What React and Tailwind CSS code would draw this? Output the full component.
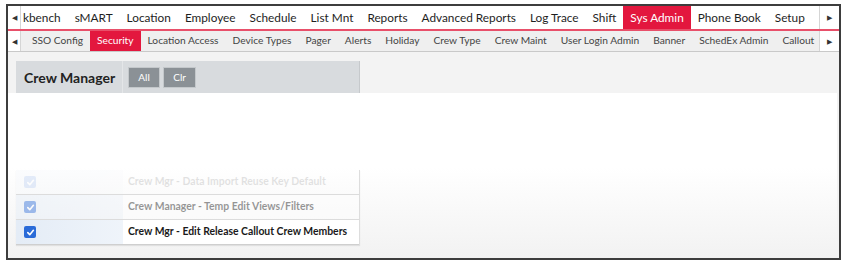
const topItems = ["sMART", "Location", "Employee", "Schedule", "List Mnt", "Reports", "Advanced Reports", "Log Trace", "Shift", "Sys Admin", "Phone Book", "Setup"];
const subItems = ["SSO Config", "Security", "Location Access", "Device Types", "Pager", "Alerts", "Holiday", "Crew Type", "Crew Maint", "User Login Admin", "Banner", "SchedEx Admin", "Callout"];

const rows = [
  { label: "Crew Mgr - Data Import Reuse Key Default", fade: "opacity-[0.12]" },
  { label: "Crew Manager - Temp Edit Views/Filters", fade: "opacity-45" },
  { label: "Crew Mgr - Edit Release Callout Crew Members", fade: "opacity-100" },
];

function Check() {
  return (
    <span className="w-[12px] h-[12px] rounded-[2px] bg-[#2a6bd8] flex items-center justify-center">
      <svg width="9" height="9" viewBox="0 0 10 10">
        <path d="M2 5.2 L4.2 7.4 L8.2 2.6" fill="none" stroke="#fff" strokeWidth="1.8" strokeLinecap="round" strokeLinejoin="round" />
      </svg>
    </span>
  );
}

export default function App() {
  return (
    <div className="w-[844px] h-[264px] bg-white pt-[4px] pl-[6px]" style={{ fontFamily: "Lato, 'Open Sans', sans-serif" }}>
      <div className="w-[835px] h-[256px] border-2 border-[#3d3d3d] flex flex-col overflow-hidden">
        {/* top menu */}
        <div className="h-[25px] flex items-stretch border-b-2 border-[#e8506a] bg-white shrink-0">
          <div className="w-[13px] flex items-center justify-center border-r border-[#d5d5d5] text-[7px] text-[#333]">◀</div>
          <div className="flex-1 min-w-0 flex items-stretch overflow-hidden text-[11.8px] text-[#1e1e1e]">
            <div className="flex items-center pl-[2px] pr-[7px]">kbench</div>
            {topItems.map((t) => (
              <div
                key={t}
                className={`flex items-center px-[7px] whitespace-nowrap ${t === "Sys Admin" ? "bg-[#e3173e] text-white" : ""}`}
              >
                {t}
              </div>
            ))}
          </div>
          <div className="w-[20px] shrink-0 flex items-center justify-center border-l border-[#d5d5d5] text-[7px] text-[#333]">▶</div>
        </div>

        {/* sub menu */}
        <div className="h-[21px] flex items-stretch bg-[#efefef] border-b border-[#c9c9c9] shrink-0">
          <div className="w-[13px] flex items-center justify-center border-r border-[#d5d5d5] bg-white text-[7px] text-[#333]">◀</div>
          <div className="flex-1 min-w-0 flex items-stretch overflow-hidden text-[10.2px] text-[#444] pl-[4px]">
            {subItems.map((t) => (
              <div
                key={t}
                className={`flex items-center px-[7px] whitespace-nowrap ${t === "Security" ? "bg-[#e3173e] text-white" : ""}`}
              >
                {t}
              </div>
            ))}
          </div>
          <div className="w-[20px] shrink-0 flex items-center justify-center border-l border-[#d5d5d5] bg-white text-[7px] text-[#333]">▶</div>
        </div>

        {/* content */}
        <div className="flex-1 flex flex-col bg-[#f3f3f3]">
          <div className="pt-[9px] pl-[8px]">
            <div className="w-[344px] h-[32px] flex items-center bg-[#d8dbde] border-r border-[#c6c9cc]">
              <div className="h-full flex items-center pl-[8px] pr-[7px] border-r border-[#e4e6e8] text-[14px] font-bold text-[#222]">
                Crew Manager
              </div>
              <div className="flex items-center gap-[3px] pl-[5px]">
                <button className="w-[32px] h-[21px] bg-[#8b9196] border border-[#c4c8cb] text-white text-[10px]">All</button>
                <button className="w-[33px] h-[21px] bg-[#8b9196] border border-[#c4c8cb] text-white text-[10px]">Clr</button>
              </div>
            </div>
          </div>

          <div className="flex-1 mr-[2px] bg-linear-to-b from-white from-45% to-[#f2f2f2] pt-[77px] pl-[8px]">
            <div className="w-[344px] border-r border-[#dddddd] shadow-[0_1px_1px_rgba(0,0,0,0.08)]">
              {rows.map((r, i) => (
                <div
                  key={r.label}
                  className={`h-[25px] flex items-stretch ${i < 2 ? "border-b border-[#dcdcdc]" : "border-b border-[#cfcfcf]"}`}
                >
                  <div className={`w-[107px] flex items-center pl-[8px] bg-linear-to-r from-[#e4ecf6] to-[#eff4fa] ${r.fade}`}>
                    <Check />
                  </div>
                  <div className={`flex-1 flex items-center pl-[5px] bg-white text-[10.4px] font-bold text-[#1a1a1a] whitespace-nowrap ${r.fade}`}>
                    {r.label}
                  </div>
                </div>
              ))}
            </div>
          </div>
        </div>
      </div>
    </div>
  );
}
